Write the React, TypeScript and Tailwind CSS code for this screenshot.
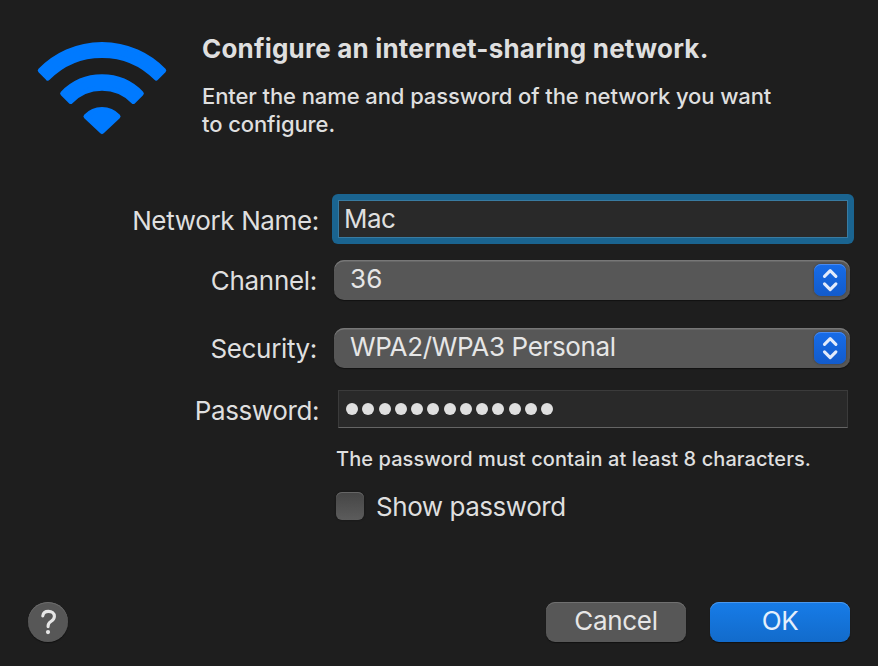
import React from "react";

function WifiIcon() {
  return (
    <svg
      className="h-[100px] w-[136px] shrink-0"
      viewBox="34 38 136 100"
      fill="#007aff"
      stroke="#007aff"
      strokeWidth="5"
      strokeLinejoin="round"
    >
      <path d="M40.3 70.6A86 86 0 0 1 163.7 70.6L156.2 78.1A76.3 76.3 0 0 0 47.8 78.1Z" />
      <path d="M62.7 93.4A54.8 54.8 0 0 1 141.3 93.4L133.3 101.4A43.7 43.7 0 0 0 70.7 101.4Z" />
      <path d="M86 116.4A21.8 21.8 0 0 1 118 116.4L102 131.5Z" />
    </svg>
  );
}

function Select({ value, spacing }: { value: string; spacing: string }) {
  return (
    <button className="flex h-10 w-[516px] items-center justify-between rounded-[10px] bg-[#575757] pr-1 pl-4 text-[#e6e6e6] shadow-[inset_0_1.5px_0_#777,0_1px_1px_#111]">
      <span className={`-mt-0.5 ${spacing}`}>{value}</span>
      <span className="flex size-8 items-center justify-center rounded-[7px] bg-linear-to-b from-[#176ce8] to-[#125bcb] shadow-[inset_0_1px_0_#4a8bf0,0_0_2px_#333]">
        <svg
          className="h-8 w-8"
          viewBox="0 0 32 32"
          fill="none"
          stroke="#e2ebfb"
          strokeWidth="3.1"
          strokeLinecap="round"
          strokeLinejoin="round"
        >
          <path d="M10.5 12.3L16.2 6.6L21.9 12.3M10.5 19.9L16.2 25.6L21.9 19.9" />
        </svg>
      </span>
    </button>
  );
}

function Label({ children, className }: { children: string; className: string }) {
  return <div className={`w-[320px] shrink-0 text-right ${className}`}>{children}</div>;
}

export default function App() {
  return (
    <div className="flex h-[666px] w-[878px] flex-col overflow-hidden bg-[#1e1e1e] font-['Inter',sans-serif] text-[26px] leading-8 whitespace-nowrap text-[#dfdfdf]">
      <header className="flex h-[194px] pt-[33px] pl-[34px]">
        <div className="pt-[5px]">
          <WifiIcon />
        </div>
        <div className="pl-8">
          <h1 className="text-[26px] leading-8 font-bold tracking-[0.2px]">
            Configure an internet-sharing network.
          </h1>
          <p className="mt-[17px] text-[22px] leading-7 font-medium tracking-[-0.09px]">
            Enter the name and password of the network you want
            <br />
            to configure.
          </p>
        </div>
      </header>

      <main className="flex h-[408px] flex-col">
        <div className="flex h-[50px] items-center">
          <Label className="pt-1 pr-px tracking-[-0.35px]">Network Name:</Label>
          <div className="ml-3 h-[50px] w-[522px] rounded-[6px] bg-[#1a6490] p-[6px]">
            <div className="flex h-[38px] items-center border border-[#397ba1] bg-[#292929] pl-[5px] tracking-[-0.6px]">
              Mac
            </div>
          </div>
        </div>
        <div className="mt-4 flex h-10 items-center">
          <Label className="pt-0.5 pr-[3px] tracking-[-0.3px]">Channel:</Label>
          <div className="ml-3.5">
            <Select value="36" spacing="tracking-[0.2px]" />
          </div>
        </div>
        <div className="mt-7 flex h-10 items-center">
          <Label className="pt-0.5 pr-[3px] tracking-[-0.35px]">Security:</Label>
          <div className="ml-3.5">
            <Select value="WPA2/WPA3 Personal" spacing="tracking-[-0.35px]" />
          </div>
        </div>
        <div className="mt-[22px] flex h-[38px] items-center">
          <Label className="pt-1 pr-px tracking-[-0.4px]">Password:</Label>
          <div className="ml-[18px] flex h-[38px] w-[510px] items-center gap-[4.25px] border border-[#3b3b3b] border-b-[#656565] bg-[#292929] pl-[7px]">
            {Array.from({ length: 13 }, (_, i) => (
              <span key={i} className="size-3 rounded-full bg-[#dfdfdf]" />
            ))}
          </div>
        </div>
        <p className="mt-[17px] pl-[336px] text-[20px] leading-7 font-medium tracking-[0.08px]">
          The password must contain at least 8 characters.
        </p>
        <label className="mt-[18px] flex items-center pl-[336px]">
          <span className="-mt-0.5 size-7 rounded-[6px] bg-linear-to-b from-[#454545] to-[#5c5c5c] shadow-[inset_0_1px_0_#666,0_0_2px_#111]" />
          <span className="ml-3 tracking-[-0.46px]">Show password</span>
        </label>
      </main>

      <footer className="flex items-center pr-7 pl-7">
        <button className="flex size-10 items-center justify-center rounded-full bg-[#575757] shadow-[inset_0_1px_0_#6c6c6c,0_1px_1px_#111]">
          <svg
            className="size-10"
            viewBox="0 0 40 40"
            fill="none"
            stroke="#e6e6e6"
            strokeWidth="3.1"
            strokeLinecap="round"
            strokeLinejoin="round"
          >
            <path d="M14.8 13.9C15.2 11 17.3 9.4 20.4 9.4C24 9.4 26.4 11.3 26.4 14.3C26.4 16.7 25.2 18 23.2 19.3C21 20.7 20.1 21.8 20.1 24V24.6" />
            <circle cx="20" cy="30.1" r="2.1" fill="#e6e6e6" stroke="none" />
          </svg>
        </button>
        <button className="ml-auto h-10 w-[140px] rounded-[9px] bg-[#575757] pb-0.5 tracking-[-0.3px] text-[#e6e6e6] shadow-[inset_0_1px_0_#707070,0_1px_1px_#111]">
          Cancel
        </button>
        <button className="mr-0 ml-6 h-10 w-[140px] rounded-[9px] bg-linear-to-b from-[#177ce8] to-[#126bcb] pb-0.5 tracking-[-0.5px] text-[#e4effc] shadow-[inset_0_1px_0_#4a98ee,0_1px_1px_#111]">
          OK
        </button>
      </footer>
    </div>
  );
}
